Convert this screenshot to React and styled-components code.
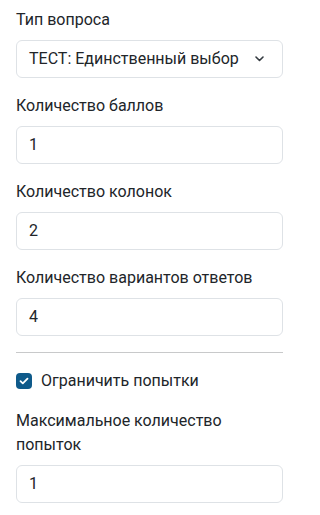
import styled, { createGlobalStyle } from "styled-components";

const GlobalStyle = createGlobalStyle`
    * { box-sizing: border-box; }
    body {
        margin: 0;
        background: #fff;
        font-family: Roboto, "Liberation Sans", sans-serif;
        font-size: 16px;
        line-height: 1.5;
        color: #212529;
    }
`;

const Panel = styled.div`
    width: 298px;
    padding: 8px 15px 0 16px;
`;

const Group = styled.div`
    margin-bottom: ${(p) => (p.last ? 0 : 16)}px;
`;

const Label = styled.label`
    display: block;
    margin-bottom: 8px;
    font-size: 16px;
    line-height: 24px;
    color: #212529;
`;

const Field = styled.div`
    display: flex;
    align-items: center;
    justify-content: space-between;
    height: 38px;
    padding: 0 18px 0 12px;
    border: 1px solid #dee2e6;
    border-radius: 6px;
    background: #fff;
    font-size: 16px;
    color: #212529;
`;

const Divider = styled.hr`
    margin: 16px 0;
    border: 0;
    border-top: 1px solid #c8c9ca;
`;

const CheckRow = styled.div`
    display: flex;
    align-items: center;
    gap: 9px;
    height: 24px;
    margin-bottom: 16px;
`;

const Box = styled.span`
    display: flex;
    align-items: center;
    justify-content: center;
    width: 16px;
    height: 16px;
    border-radius: 4px;
    background: #0e5a8a;
`;

const Chevron = () => (
    <svg width="9" height="6" viewBox="0 0 9 6">
        <path d="M1 1l3.5 3.5L8 1" fill="none" stroke="#343a40" strokeWidth="1.6" strokeLinecap="round" strokeLinejoin="round" />
    </svg>
);

const Check = () => (
    <svg width="10" height="8" viewBox="0 0 10 8">
        <path d="M1.5 4.2l2.3 2.2L8.5 1.6" fill="none" stroke="#fff" strokeWidth="1.8" strokeLinecap="round" strokeLinejoin="round" />
    </svg>
);

const fields = [
    { label: "Количество баллов", value: "1" },
    { label: "Количество колонок", value: "2" },
    { label: "Количество вариантов ответов", value: "4" },
];

export default function App() {
    return (
        <Panel>
            <GlobalStyle />
            <Group>
                <Label>Тип вопроса</Label>
                <Field>
                    <span>ТЕСТ: Единственный выбор</span>
                    <Chevron />
                </Field>
            </Group>
            {fields.map((f, i) => (
                <Group key={f.label} last={i === fields.length - 1}>
                    <Label>{f.label}</Label>
                    <Field>{f.value}</Field>
                </Group>
            ))}
            <Divider />
            <CheckRow>
                <Box><Check /></Box>
                <span>Ограничить попытки</span>
            </CheckRow>
            <Group last>
                <Label>Максимальное количество попыток</Label>
                <Field>1</Field>
            </Group>
        </Panel>
    );
}
